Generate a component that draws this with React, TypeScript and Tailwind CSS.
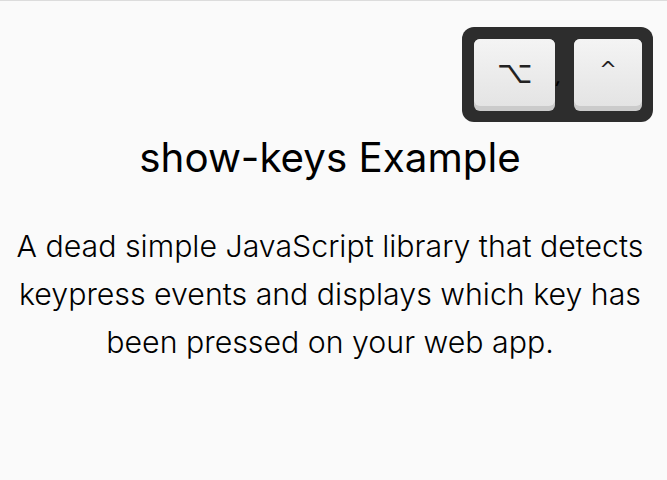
import React from "react";

function Key({ children, w }: { children: React.ReactNode; w: string }) {
  return (
    <div className={`${w} h-[72px] rounded-[6px] bg-[#cbcbcb] pb-[5px]`}>
      <div className="h-full w-full rounded-[6px] bg-gradient-to-b from-[#f4f4f4] to-[#e4e4e4] flex items-center justify-center text-[#222] font-['DejaVu_Sans',sans-serif]">
        {children}
      </div>
    </div>
  );
}

export default function App() {
  return (
    <div className="relative w-[667px] h-[480px] bg-[#fafafa] border-t border-[#dcdcdc] font-['Inter',sans-serif] text-black overflow-hidden">
      <div className="absolute left-[462px] top-[26px] w-[191px] h-[95px] rounded-[12px] bg-[#2d2d2d] flex items-center pl-[12px]">
        <Key w="w-[81px]">
          <span className="text-[31px] leading-none">⌥</span>
        </Key>
        <span className="w-[19px] text-[16px] font-bold italic leading-none text-black pl-[1px] mt-[4px]">,</span>
        <Key w="w-[68px]">
          <span className="text-[21px] leading-none mb-[4px]">^</span>
        </Key>
      </div>
      <div className="flex flex-col items-center pt-[133px] pr-[7px]">
        <h1 className="text-[40.3px] font-normal leading-[48px]">show-keys Example</h1>
        <p className="mt-[40px] w-[644px] text-center text-[30.3px] font-light leading-[48px]">
          A dead simple JavaScript library that detects keypress events and displays which key has been pressed on your web app.
        </p>
      </div>
    </div>
  );
}
